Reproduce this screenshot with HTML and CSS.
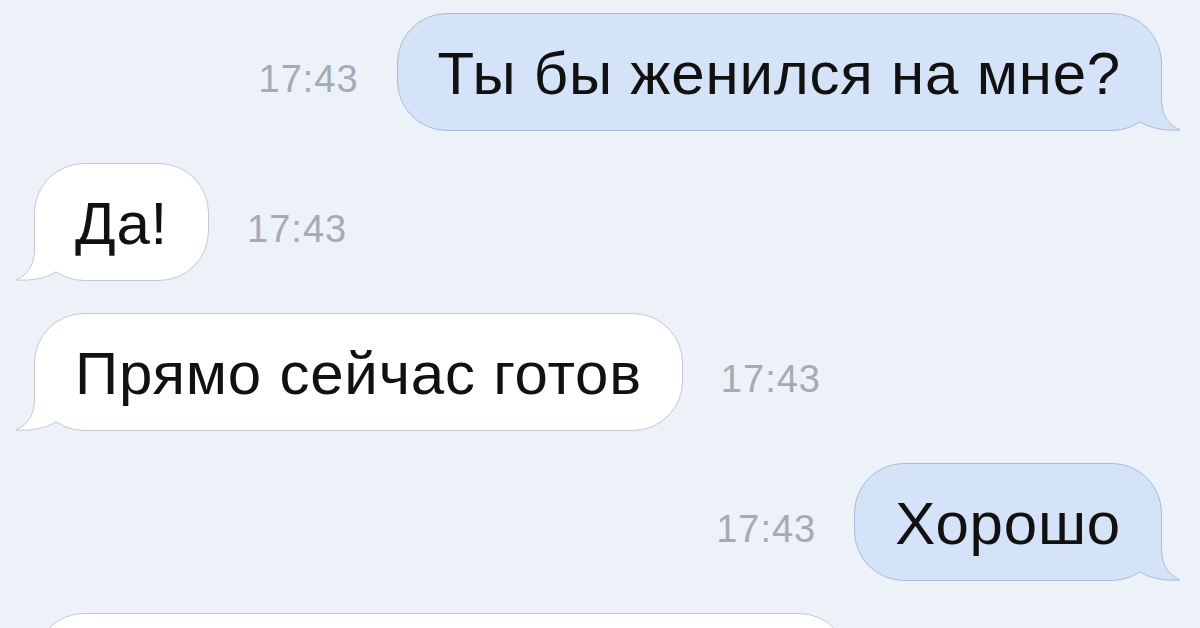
FILE: index.html
```html
<!DOCTYPE html>
<html lang="ru">
<head>
    <meta charset="UTF-8">
    <meta name="viewport" content="width=device-width, initial-scale=1.0">
    <title>Переписка</title>
    <link rel="stylesheet" href="styles.css">
</head>
<body>
    <div class="chat">
        <div class="row out">
            <span class="time">17:43</span>
            <div class="bubble">
                <span class="text">Ты бы женился на мне?</span>
                <svg class="tail" width="90" height="70" viewBox="0 0 90 70">
                    <path class="tail-fill" d="M67.5 -2 V36 C67.5 52 73 62 86 68 C72 69 56 66.5 46 59.8 Z"/>
                    <path class="tail-line" d="M67.5 -2 V36 C67.5 52 73 62 86 68 C72 69 56 66.5 46 59.8"/>
                </svg>
            </div>
        </div>

        <div class="row in">
            <div class="bubble">
                <span class="text">Да!</span>
                <svg class="tail" width="90" height="70" viewBox="0 0 90 70">
                    <path class="tail-fill" d="M67.5 -2 V36 C67.5 52 73 62 86 68 C72 69 56 66.5 46 59.8 Z"/>
                    <path class="tail-line" d="M67.5 -2 V36 C67.5 52 73 62 86 68 C72 69 56 66.5 46 59.8"/>
                </svg>
            </div>
            <span class="time">17:43</span>
        </div>

        <div class="row in">
            <div class="bubble">
                <span class="text">Прямо сейчас готов</span>
                <svg class="tail" width="90" height="70" viewBox="0 0 90 70">
                    <path class="tail-fill" d="M67.5 -2 V36 C67.5 52 73 62 86 68 C72 69 56 66.5 46 59.8 Z"/>
                    <path class="tail-line" d="M67.5 -2 V36 C67.5 52 73 62 86 68 C72 69 56 66.5 46 59.8"/>
                </svg>
            </div>
            <span class="time">17:43</span>
        </div>

        <div class="row out">
            <span class="time">17:43</span>
            <div class="bubble">
                <span class="text">Хорошо</span>
                <svg class="tail" width="90" height="70" viewBox="0 0 90 70">
                    <path class="tail-fill" d="M67.5 -2 V36 C67.5 52 73 62 86 68 C72 69 56 66.5 46 59.8 Z"/>
                    <path class="tail-line" d="M67.5 -2 V36 C67.5 52 73 62 86 68 C72 69 56 66.5 46 59.8"/>
                </svg>
            </div>
        </div>

        <!-- next message, cut off by the bottom edge -->
        <div class="row in">
            <div class="bubble bubble-wide"></div>
        </div>
    </div>
</body>
</html>
```

FILE: styles.css
```css
html, body {
    margin: 0;
    height: 628px;
    overflow: hidden;
}
body {
    font-family: "Liberation Sans", Arial, sans-serif;
    background-color: #edf1f8;
    color: #111;
}
.chat {
    display: flex;
    flex-direction: column;
    gap: 32px;
    padding-top: 13px;
}
.row {
    display: flex;
    align-items: center;
    gap: 38px;
}
.row.out {
    justify-content: flex-end;
    padding-right: 38px;
}
.row.in {
    padding-left: 34px;
}
.bubble {
    position: relative;
    box-sizing: border-box;
    height: 118px;
    display: flex;
    align-items: center;
    padding: 4px 40px 0;
    border: 1px solid;
    border-radius: 50px;
}
.text {
    position: relative;
    z-index: 1;
    font-size: 60px;
    letter-spacing: 0.8px;
    line-height: 1;
    white-space: nowrap;
}
.time {
    font-size: 38px;
    letter-spacing: 1px;
    line-height: 1;
    color: #a4abb4;
    margin-top: 14px;
}
/* tail svg: x=68 / y=69 sit on the outer edge of the bubble border */
.tail {
    position: absolute;
    bottom: -2px;
    right: -23px;
    overflow: visible;
}
.tail-line {
    fill: none;
    stroke-width: 1;
}
.in .tail {
    right: auto;
    left: -23px;
    transform: scaleX(-1);
}
.out .bubble {
    background-color: #d4e3f8;
    border-color: #a9bcd7;
}
.out .tail-fill {
    fill: #d4e3f8;
}
.out .tail-line {
    stroke: #a9bcd7;
}
.in .bubble {
    background-color: #fff;
    border-color: #c4c9d0;
}
.in .tail-fill {
    fill: #fff;
}
.in .tail-line {
    stroke: #c4c9d0;
}
.bubble-wide {
    width: 815px;
}
```
